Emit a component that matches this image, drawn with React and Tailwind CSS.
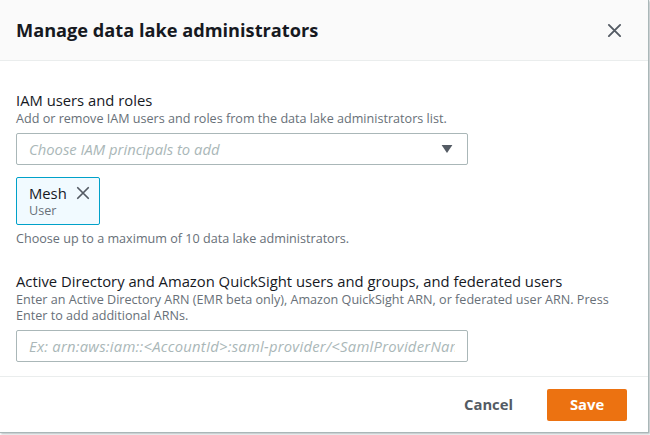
import React from 'react';

const font = { fontFamily: '"Open Sans", "Noto Sans", sans-serif' };

function CloseIcon({ className }) {
  return (
    <svg viewBox="0 0 16 16" className={className} fill="none" stroke="currentColor" strokeWidth="2" strokeLinecap="round">
      <path d="M2 2l12 12M14 2L2 14" />
    </svg>
  );
}

export default function App() {
  return (
    <div className="w-[650px] h-[435px] bg-white text-[#16191f]" style={font}>
      <div className="w-[649px] h-[433px] flex flex-col bg-white border-r border-b border-[#aab7b8] shadow-[1px_1px_2px_rgba(0,28,36,0.3)]">
        <div className="h-[61px] shrink-0 flex items-center justify-between pl-4 pr-[26px] bg-[#fafafa] border-b border-[#eaeded]">
          <h2 className="text-[18.2px] font-bold leading-[22px]">Manage data lake administrators</h2>
          <button type="button" className="text-[#545b64]">
            <CloseIcon className="w-[15px] h-[15px]" />
          </button>
        </div>

        <div className="flex-1 px-4 pt-[28px]">
          <div className="text-[14.8px] leading-[22px]">IAM users and roles</div>
          <div className="text-[12.6px] leading-[16px] text-[#687078]">
            Add or remove IAM users and roles from the data lake administrators list.
          </div>
          <div className="mt-[6px] w-[452px] h-[32px] flex items-center justify-between px-3 border border-[#aab7b8] rounded-[2px]">
            <span className="text-[14.8px] italic text-[#aab7b8]">Choose IAM principals to add</span>
            <svg viewBox="0 0 12 10" className="w-[12px] h-[9px] mr-[2px] text-[#545b64]" fill="currentColor">
              <path d="M0 0h12L6 9z" />
            </svg>
          </div>
          <div className="mt-3 w-[84px] h-[48px] flex flex-col justify-center pl-3 pr-[9px] bg-[#f1faff] border border-[#00a1c9] rounded-[2px]">
            <div className="flex items-center justify-between">
              <span className="text-[14.8px] leading-[20px]">Mesh</span>
              <CloseIcon className="w-[14px] h-[14px] text-[#545b64]" />
            </div>
            <span className="text-[12.6px] leading-[16px] text-[#687078]">User</span>
          </div>
          <div className="mt-[6px] text-[12.6px] leading-[16px] text-[#687078]">
            Choose up to a maximum of 10 data lake administrators.
          </div>

          <div className="mt-[23px] text-[14.8px] leading-[22px]">
            Active Directory and Amazon QuickSight users and groups, and federated users
          </div>
          <div className="text-[12.6px] leading-[16px] text-[#687078]">
            Enter an Active Directory ARN (EMR beta only), Amazon QuickSight ARN, or federated user ARN. Press
            <br />
            Enter to add additional ARNs.
          </div>
          <div className="mt-[6px] w-[452px] h-[32px] flex items-center px-3 border border-[#aab7b8] rounded-[2px]">
            <div className="flex-1 overflow-hidden">
              <span className="block text-[14.8px] italic tracking-[0.25px] text-[#aab7b8] whitespace-nowrap">
                Ex: arn:aws:iam::&lt;AccountId&gt;:saml-provider/&lt;SamlProviderName&gt;
              </span>
            </div>
          </div>
        </div>

        <div className="h-[56px] shrink-0 flex items-center justify-end gap-[34px] pr-[21px] border-t border-[#eaeded]">
          <button type="button" className="text-[14.8px] font-bold text-[#545b64]">Cancel</button>
          <button type="button" className="w-[80px] h-[32px] rounded-[2px] bg-[#ec7211] text-white text-[14.8px] font-bold">
            Save
          </button>
        </div>
      </div>
    </div>
  );
}
